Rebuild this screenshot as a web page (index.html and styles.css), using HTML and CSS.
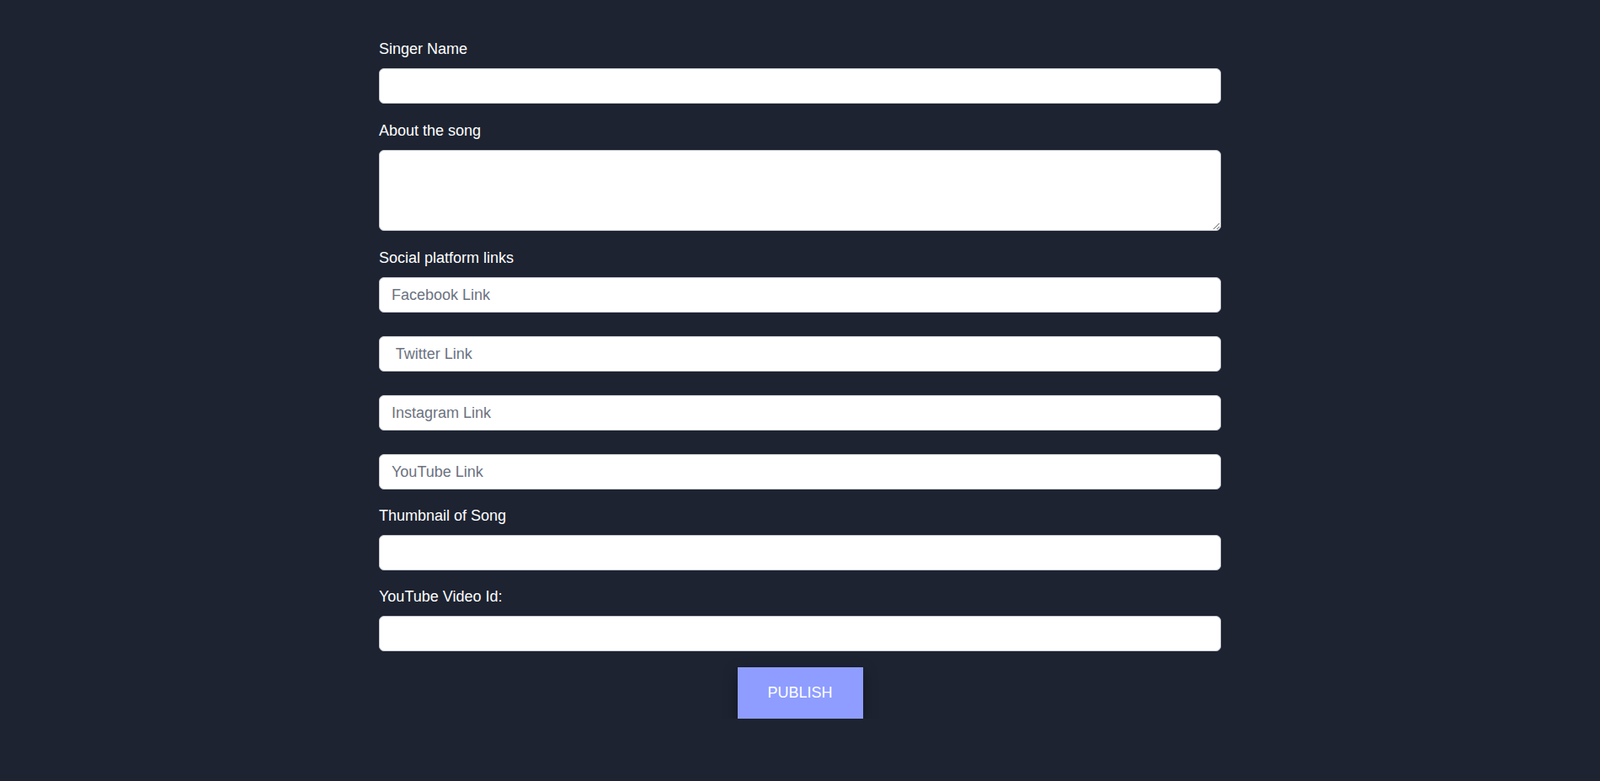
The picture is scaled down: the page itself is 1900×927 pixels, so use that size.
FILE: index.html
```html
<!DOCTYPE html>
<html lang="en">

<head>
    <meta charset="UTF-8">
    <title>Publish Song</title>
    <link rel="stylesheet" href="styles.css">
</head>

<body>
    <form class="song-form">
        <label for="singer">Singer Name</label>
        <input type="text" id="singer" class="felt">

        <label for="about">About the song</label>
        <textarea id="about" class="felt omtale"></textarea>

        <label>Social platform links</label>
        <div class="sociale">
            <input type="text" class="felt" placeholder="Facebook Link">
            <input type="text" class="felt" placeholder=" Twitter Link">
            <input type="text" class="felt" placeholder="Instagram Link">
            <input type="text" class="felt" placeholder="YouTube Link">
        </div>

        <label for="thumb">Thumbnail of Song</label>
        <input type="text" id="thumb" class="felt">

        <label for="video">YouTube Video Id:</label>
        <input type="text" id="video" class="felt">

        <div class="knap-boks">
            <button type="submit" class="publish">Publish</button>
        </div>
    </form>
</body>

</html>
```

FILE: styles.css
```css
body {
    margin: 0;
    background-color: #1d2331;
    font-family: "Liberation Sans", Arial, sans-serif;
    color: #fff;
}

.song-form {
    width: 1000px;
    margin: 0 auto;
    padding-top: 48px;
}

.song-form label {
    display: block;
    font-size: 18px;
    line-height: 21px;
    margin-bottom: 12px;
}

.felt {
    display: block;
    box-sizing: border-box;
    width: 100%;
    height: 42px;
    margin: 0 0 21px 0;
    padding: 0 14px;
    border: 1px solid #c9ccd3;
    border-radius: 6px;
    background-color: #fff;
    font-family: "Liberation Sans", Arial, sans-serif;
    font-size: 18px;
    color: #333;
}

.felt::placeholder {
    color: #6b7280;
}

#singer {
    margin-bottom: 22px;
}

.omtale {
    height: 96px;
    margin-bottom: 22px;
    padding-top: 10px;
    resize: vertical;
}

.sociale .felt {
    margin-bottom: 28px;
}

.sociale .felt:last-child {
    margin-bottom: 21px;
}

.knap-boks {
    text-align: center;
}

.publish {
    width: 149px;
    height: 61px;
    margin-top: -2px;
    border: none;
    background-color: #8e9dff;
    color: #fff;
    font-family: "Liberation Sans", Arial, sans-serif;
    font-size: 18px;
    text-transform: uppercase;
    box-shadow: 0 6px 16px rgba(0, 0, 0, .35);
    cursor: pointer;
}
```
